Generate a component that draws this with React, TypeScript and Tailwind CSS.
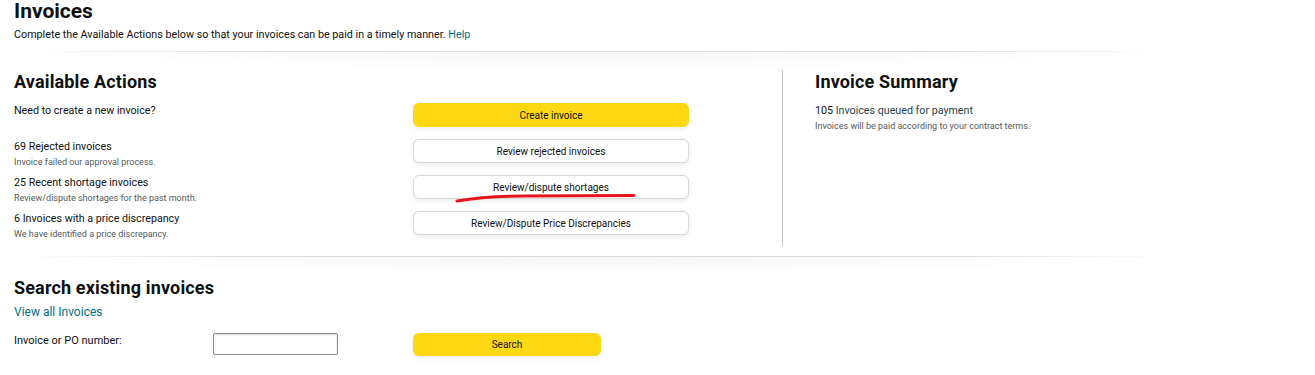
import React from 'react'

const font = { fontFamily: 'Roboto, "Liberation Sans", Arial, sans-serif' }

const Divider = () => (
  <div className="w-[1160px] h-[20px]">
    <div className="h-px w-full bg-[linear-gradient(to_right,rgba(0,0,0,0),rgba(0,0,0,0.13)_20%,rgba(0,0,0,0.13)_80%,rgba(0,0,0,0))]" />
    <div className="h-[19px] w-full bg-[radial-gradient(ellipse_at_top,rgba(0,0,0,0.035),rgba(0,0,0,0)_70%)]" />
  </div>
)

const actions = [
  { title: '69 Rejected invoices', sub: 'Invoice failed our approval process.', label: 'Review rejected invoices' },
  { title: '25 Recent shortage invoices', sub: 'Review/dispute shortages for the past month.', label: 'Review/dispute shortages' },
  { title: '6 Invoices with a price discrepancy', sub: 'We have identified a price discrepancy.', label: 'Review/Dispute Price Discrepancies' },
]

const btnBase = 'w-[276px] h-[24px] rounded-[6px] text-[10px] text-[#0F1111] flex items-center justify-center shadow-[0_2px_5px_0_rgba(213,217,217,0.5)]'

export default function App() {
  return (
    <div className="relative w-[1315px] h-[375px] bg-white text-[#0F1111] pl-[14px] overflow-hidden" style={font}>
      {/* Header */}
      <h1 className="text-[21px] leading-[22px] font-bold">Invoices</h1>
      <p className="text-[10.75px] leading-[14px] mt-[6px]">
        Complete the Available Actions below so that your invoices can be paid in a timely manner.{' '}
        <span className="text-[#007185]">Help</span>
      </p>
      <div className="mt-[9px]">
        <Divider />
      </div>

      {/* Actions + summary */}
      <div className="flex -mt-[1px]">
        <div className="w-[768px] pt-[1px] pb-[21px]">
          <h2 className="text-[18px] leading-[22px] font-bold tracking-[0.15px]">Available Actions</h2>
          <div className="mt-[10px] flex flex-col gap-[12px]">
            <div className="flex items-start h-[24px]">
              <div className="w-[399px] pt-[1px] text-[10.7px] leading-[14px]">Need to create a new invoice?</div>
              <button className={`${btnBase} bg-[#FFD814]`}>Create invoice</button>
            </div>
            {actions.map(a => (
              <div key={a.title} className="flex items-start h-[24px]">
                <div className="w-[399px] pt-[1px]">
                  <div className="text-[10.7px] leading-[14px]">{a.title}</div>
                  <div className="mt-[1px] text-[9px] leading-[14px] text-[#565959]">{a.sub}</div>
                </div>
                <button className={`${btnBase} bg-white border border-[#D5D9D9]`}>{a.label}</button>
              </div>
            ))}
          </div>
        </div>
        <div className="h-[176px] border-l border-[#c4c4c4] pl-[32px] pt-[1px]">
          <h2 className="text-[18px] leading-[22px] font-bold tracking-[0.15px]">Invoice Summary</h2>
          <div className="mt-[11px] text-[10.7px] leading-[14px]">
            105 <span className="text-[#24434c]">Invoices queued for payment</span>
          </div>
          <div className="mt-[1px] text-[9px] leading-[14px] text-[#565959]">Invoices will be paid according to your contract terms.</div>
        </div>
      </div>

      <Divider />

      {/* Search */}
      <div className="-mt-[1px] pt-[2px]">
        <h2 className="text-[18px] leading-[22px] font-bold tracking-[0.15px]">Search existing invoices</h2>
        <div className="mt-[5px] text-[12px] leading-[16px] text-[#007185]">View all Invoices</div>
        <div className="mt-[13px] flex items-start">
          <div className="w-[199px] text-[11px] leading-[14px] mt-[1px]">Invoice or PO number:</div>
          <input className="w-[125px] h-[22px] border border-[#888c8c] rounded-[2px] shadow-[inset_0_1px_2px_rgba(15,17,17,0.15)] outline-none" />
          <button className="ml-[75px] w-[188px] h-[23px] rounded-[6px] bg-[#FFD814] text-[10px] text-[#0F1111] flex items-center justify-center shadow-[0_2px_5px_0_rgba(213,217,217,0.5)]">
            Search
          </button>
        </div>
      </div>

      {/* hand-drawn red mark */}
      <svg className="absolute left-[455px] top-[192px]" width="182" height="12" viewBox="0 0 182 12">
        <path d="M2 9 C 20 6, 45 4, 70 4 L 179 3.5" stroke="#e8141c" strokeWidth="3" fill="none" strokeLinecap="round" />
      </svg>
    </div>
  )
}
